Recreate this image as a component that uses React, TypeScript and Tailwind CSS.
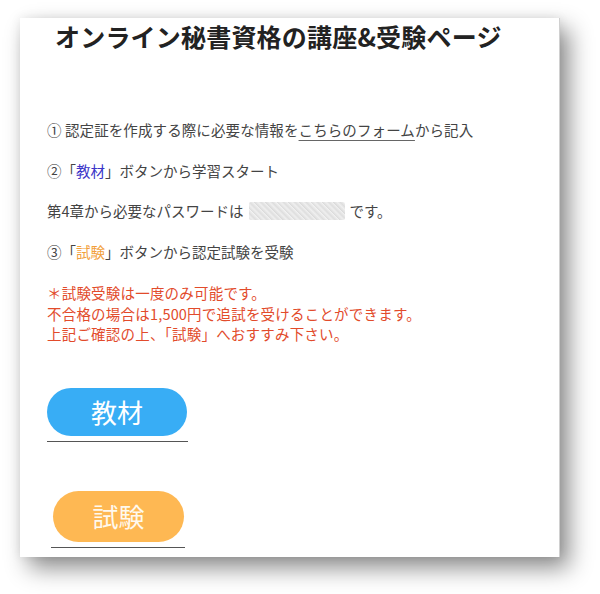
import React from "react";

const font = { fontFamily: '"Noto Sans CJK JP", "Noto Sans", sans-serif' };

export default function App() {
  return (
    <div className="w-[600px] h-[594px] bg-white pt-[18px] pl-[20px]" style={font}>
      <div className="w-[540px] h-[539px] bg-white border-r border-[#d0d0d0] shadow-[9px_11px_22px_rgba(0,0,0,0.45),0_0_10px_rgba(0,0,0,0.08)] flex flex-col">
        <h1 className="pl-[35px] text-[25px] leading-[37px] font-bold text-[#222] tracking-[0.2px]">
          オンライン秘書資格の講座&amp;受験ページ
        </h1>
        <div className="pl-[27px] mt-[65px] text-[14.5px] leading-[20px] text-[#444] flex flex-col gap-[20.5px]">
          <p className="tracking-[0.1px]">
            ① 認定証を作成する際に必要な情報を
            <span className="underline underline-offset-[4px] decoration-[#666]">こちらのフォーム</span>
            から記入
          </p>
          <p>
            ②「<span className="text-[#3b34c8]">教材</span>」ボタンから学習スタート
          </p>
          <p className="flex items-center">
            <span>第4章から必要なパスワードは</span>
            <span className="inline-block w-[96px] h-[18px] mx-[5px] rounded-[2px] bg-[#e4e4e4] bg-[repeating-linear-gradient(45deg,#dadada_0px,#efefef_3px,#dedede_5px,#f3f3f3_8px)]"></span>
            <span>です。</span>
          </p>
          <p>
            ③「<span className="text-[#f2a03a]">試験</span>」ボタンから認定試験を受験
          </p>
          <p className="text-[14.5px] leading-[20.5px] text-[#e24b2b] mt-[1px] tracking-[0.2px]">
            ＊試験受験は一度のみ可能です。
            <br />
            不合格の場合は1,500円で追試を受けることができます。
            <br />
            上記ご確認の上、「試験」へおすすみ下さい。
          </p>
        </div>
        <div className="pl-[27px] mt-[43px] flex flex-col items-start">
          <div className="w-[141px] border-b border-[#555] pb-[5px]">
            <div className="w-[140px] h-[48px] rounded-full bg-[#38adf5] flex items-center justify-center text-white text-[26px] font-normal leading-none">
              教材
            </div>
          </div>
          <div className="ml-[4px] mt-[49px] w-[134px] border-b border-[#555] pb-[5px]">
            <div className="ml-[2px] w-[131px] h-[51px] rounded-full bg-[#feb853] flex items-center justify-center text-[#fff9ee] text-[26px] font-normal leading-none">
              試験
            </div>
          </div>
        </div>
      </div>
    </div>
  );
}
